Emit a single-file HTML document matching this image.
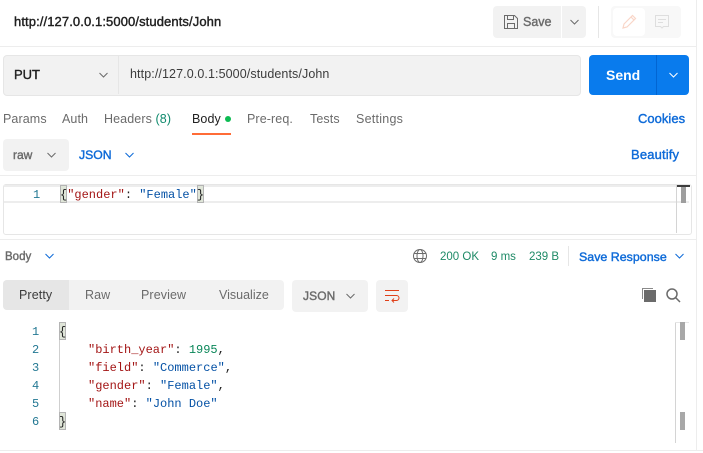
<!DOCTYPE html>
<html><head><meta charset="utf-8"><style>
html,body{margin:0;padding:0;background:#fff}
#p{position:relative;width:703px;height:453px;overflow:hidden;background:#fff;font-family:"Liberation Sans",sans-serif;font-size:12px;color:#6b6b6b}
#p div,#p span.a,#p svg{position:absolute}
.t{white-space:pre;line-height:16px;height:16px}
.tab{font-size:12.5px;letter-spacing:.1px}
.md{-webkit-text-stroke:.4px currentColor}
.m{font-family:"Liberation Mono",monospace;font-size:12px;white-space:pre;line-height:18px;height:18px;color:#212121}
.k{color:#a31515}.s{color:#0451a5}.n{color:#098658}
.ln{color:#237893;font-family:"Liberation Mono",monospace;font-size:12px;line-height:18px;height:18px}
.b{color:#0d6ad8}
svg{overflow:visible}
</style></head><body><div id="p">
<div style="left:696px;top:0;width:1px;height:450px;background:#ededed"></div>
<div style="left:0;top:46px;width:696px;height:1px;background:#ededed"></div>
<div style="left:0;top:450px;width:703px;height:1px;background:#ededed"></div>
<div class="t md" style="left:14px;top:14px;font-size:13px;color:#212121;letter-spacing:.1px">http://127.0.0.1:5000/students/John</div>

<div style="left:493px;top:6px;width:68px;height:32px;background:#f2f2f2;border-radius:4px 0 0 4px"></div>
<div style="left:562px;top:6px;width:24px;height:32px;background:#f2f2f2;border-radius:0 4px 4px 0"></div>
<svg style="left:504px;top:15px" width="14" height="14" fill="none" stroke="#6b6b6b" stroke-width="1"><path d="M.5.5H10.5L13.5 3.5V13.5H.5Z"/><path d="M3.5.5V4.5H9.5V.5M3.5 13.5V8.5H10.5V13.5"/></svg>
<div class="t md" style="left:523px;top:14px;font-size:12.5px;color:#6b6b6b">Save</div>
<svg style="left:570px;top:19px" width="9" height="6" fill="none" stroke="#6b6b6b"><path d="M.5 1L4.5 5L8.5 1"/></svg>
<div style="left:598px;top:6px;width:1px;height:32px;background:#e6e6e6"></div>
<div style="left:611px;top:6px;width:70px;height:32px;background:#f8f8f8;border-radius:4px"></div>
<div style="left:613px;top:8px;width:32px;height:28px;background:#fff;border-radius:4px"></div>
<svg style="left:622px;top:14px" width="15" height="15" fill="none" stroke="#f9d6c8" stroke-width="1.2"><path d="M1 14L2 10L10.500 1.500L13.500 4.500L5 13Z"/><path d="M9 3L12 6"/></svg>
<svg style="left:655px;top:15px" width="14" height="14" fill="none" stroke="#dedede"><path d="M.5.5H13.500V11.500H8.500L7 13L5.500 11.500H.5Z"/><path d="M3 4.500H11M3 7.500H8"/></svg>

<div style="left:3px;top:55px;width:576px;height:39px;background:#f2f2f2;border:1px solid #e6e6e6;border-radius:4px"></div>
<div style="left:118px;top:56px;width:1px;height:38px;background:#e6e6e6"></div>
<div class="t md" style="left:14px;top:67px;font-size:13px;color:#212121">PUT</div>
<svg style="left:99px;top:72px" width="9" height="6" fill="none" stroke="#6b6b6b"><path d="M.5 1L4.5 5L8.500 1"/></svg>
<div class="t" style="left:130px;top:66px;font-size:12.5px;color:#3c3c3c;letter-spacing:.1px">http://127.0.0.1:5000/students/John</div>
<div style="left:589px;top:55px;width:100px;height:40px;background:#097bed;border-radius:4px"></div>
<div style="left:656px;top:55px;width:1px;height:40px;background:#0265d2"></div>
<div class="t" style="left:606px;top:67px;font-weight:bold;font-size:14px;color:#fff">Send</div>
<svg style="left:669px;top:72px" width="9" height="6" fill="none" stroke="#fff"><path d="M.5 1L4.500 5L8.500 1"/></svg>

<div class="t tab" style="left:3px;top:111px">Params</div>
<div class="t tab" style="left:62px;top:111px">Auth</div>
<div class="t tab" style="left:104px;top:111px">Headers <span style="color:#0f8a6d">(8)</span></div>
<div class="t tab" style="left:192px;top:111px;color:#212121">Body</div>
<div style="left:225px;top:116px;width:6px;height:6px;border-radius:50%;background:#0cbb52"></div>
<div style="left:192px;top:133px;width:39px;height:2px;background:#ff6c37"></div>
<div class="t tab" style="left:247px;top:111px">Pre-req.</div>
<div class="t tab" style="left:310px;top:111px">Tests</div>
<div class="t tab" style="left:356px;top:111px;letter-spacing:.25px">Settings</div>
<div class="t b md" style="left:638px;top:111px;font-size:13px;letter-spacing:.02px">Cookies</div>

<div style="left:3px;top:139px;width:66px;height:32px;background:#f2f2f2;border-radius:4px"></div>
<div class="t md" style="left:13px;top:147px;font-size:12px">raw</div>
<svg style="left:47px;top:152px" width="9" height="6" fill="none" stroke="#6b6b6b"><path d="M.5 1L4.500 5L8.500 1"/></svg>
<div class="t b md" style="left:79px;top:147px;font-size:12.2px">JSON</div>
<svg style="left:125px;top:152px" width="9" height="6" fill="none" stroke="#0d6ad8"><path d="M.5 1L4.500 5L8.500 1"/></svg>
<div class="t b md" style="left:631px;top:147px;font-size:13px;letter-spacing:.15px">Beautify</div>
<div style="left:0;top:175px;width:696px;height:1px;background:#ededed"></div>

<div style="left:3px;top:184px;width:687px;height:49px;border:1px solid #e6e6e6;border-radius:3px"></div>
<div style="left:4px;top:185px;width:685px;height:2px;background:#ededed"></div>
<div style="left:4px;top:201px;width:685px;height:2px;background:#ededed"></div>
<div style="left:676px;top:185px;width:1px;height:48px;background:#d4d4d4"></div>
<div style="left:677px;top:185px;width:13px;height:2px;background:#3c3c3c"></div>
<div style="left:681px;top:187px;width:5px;height:16px;background:#9e9e9e"></div>
<div class="ln" style="left:33px;top:186px">1</div>
<div style="left:60px;top:185px;width:7px;height:18px;background:#dfe5d8;box-shadow:inset 0 0 0 1px #b4b4b4"></div>
<div style="left:197px;top:185px;width:7px;height:18px;background:#dfe5d8;box-shadow:inset 0 0 0 1px #b4b4b4"></div>
<div class="m" style="left:60px;top:186px">{<span class="k">"gender"</span>: <span class="s">"Female"</span>}</div>
<div style="left:0;top:239px;width:696px;height:1px;background:#ededed"></div>

<div class="t md" style="left:5px;top:249px;font-size:11.5px;color:#6b6b6b">Body</div>
<svg style="left:45px;top:253px" width="9" height="6" fill="none" stroke="#0d6ad8"><path d="M.5 1L4.500 5L8.500 1"/></svg>
<svg style="left:413px;top:249px" width="14" height="14" fill="none" stroke="#6b6b6b"><circle cx="7" cy="7" r="6.500"/><ellipse cx="7" cy="7" rx="3" ry="6.500"/><path d="M1 4.500H13M1 9.500H13"/></svg>
<div class="t" style="left:440px;top:249px;color:#1e8a66;font-size:11.500px">200 OK</div>
<div class="t" style="left:491px;top:249px;color:#1e8a66;font-size:11.500px">9 ms</div>
<div class="t" style="left:529px;top:249px;color:#1e8a66;font-size:11.500px">239 B</div>
<div style="left:568px;top:246px;width:1px;height:20px;background:#e6e6e6"></div>
<div class="t b md" style="left:579px;top:249px;font-size:12.4px;letter-spacing:.02px">Save Response</div>
<svg style="left:675px;top:253px" width="9" height="6" fill="none" stroke="#0d6ad8"><path d="M.5 1L4.500 5L8.500 1"/></svg>

<div style="left:3px;top:280px;width:281px;height:30px;background:#f2f2f2;border-radius:4px"></div>
<div style="left:3px;top:280px;width:66px;height:30px;background:#e6e6e6;border-radius:4px 0 0 4px"></div>
<div class="t tab" style="left:19px;top:287px;color:#3c3c3c">Pretty</div>
<div class="t tab" style="left:85px;top:287px">Raw</div>
<div class="t tab" style="left:141px;top:287px">Preview</div>
<div class="t tab" style="left:219px;top:287px;letter-spacing:0">Visualize</div>
<div style="left:292px;top:280px;width:76px;height:32px;background:#f2f2f2;border-radius:4px"></div>
<div class="t md" style="left:303px;top:288px;font-size:12px;letter-spacing:.1px">JSON</div>
<svg style="left:346px;top:293px" width="9" height="6" fill="none" stroke="#6b6b6b"><path d="M.5 1L4.500 5L8.500 1"/></svg>
<div style="left:376px;top:280px;width:32px;height:32px;background:#f2f2f2;border-radius:4px"></div>
<svg style="left:385px;top:290px" width="15" height="13" fill="none" stroke="#e0401a"><path d="M0 .5H14M0 5.500H11.500A2.500 2.500 0 0 1 11.500 10.500H7M9 8.500L7 10.500L9 12.500M0 10.500H4"/></svg>
<svg style="left:642px;top:288px" width="15" height="15"><path d="M0 0H11V1H1V11H0Z" fill="#8a8a8a"/><rect x="2" y="2" width="12" height="12" fill="#6b6b6b"/></svg>
<svg style="left:666px;top:288px" width="15" height="15" fill="none" stroke="#6b6b6b" stroke-width="1.500"><circle cx="6" cy="6" r="5"/><path d="M9.500 9.500L14 14"/></svg>

<div class="ln" style="left:32px;top:323px">1</div>
<div class="ln" style="left:32px;top:341px">2</div>
<div class="ln" style="left:32px;top:359px">3</div>
<div class="ln" style="left:32px;top:377px">4</div>
<div class="ln" style="left:32px;top:395px">5</div>
<div class="ln" style="left:32px;top:413px">6</div>
<div style="left:59px;top:340px;width:1px;height:72px;background:#cfcfcf"></div>
<div style="left:59px;top:322px;width:7px;height:18px;background:#dfe5d8;box-shadow:inset 0 0 0 1px #b4b4b4"></div>
<div style="left:59px;top:412px;width:7px;height:18px;background:#dfe5d8;box-shadow:inset 0 0 0 1px #b4b4b4"></div>
<div class="m" style="left:59px;top:323px">{</div>
<div class="m" style="left:88px;top:341px"><span class="k">"birth_year"</span>: <span class="n">1995</span>,</div>
<div class="m" style="left:88px;top:359px"><span class="k">"field"</span>: <span class="s">"Commerce"</span>,</div>
<div class="m" style="left:88px;top:377px"><span class="k">"gender"</span>: <span class="s">"Female"</span>,</div>
<div class="m" style="left:88px;top:395px"><span class="k">"name"</span>: <span class="s">"John Doe"</span></div>
<div class="m" style="left:59px;top:413px">}</div>
<div style="left:675px;top:322px;width:1px;height:121px;background:#d4d4d4"></div>
<div style="left:675px;top:322px;width:14px;height:1px;background:#e6e6e6"></div>
<div style="left:680px;top:322px;width:5px;height:18px;background:#a8a8a8"></div>
<div style="left:680px;top:412px;width:5px;height:18px;background:#a8a8a8"></div>
</div></body></html>
